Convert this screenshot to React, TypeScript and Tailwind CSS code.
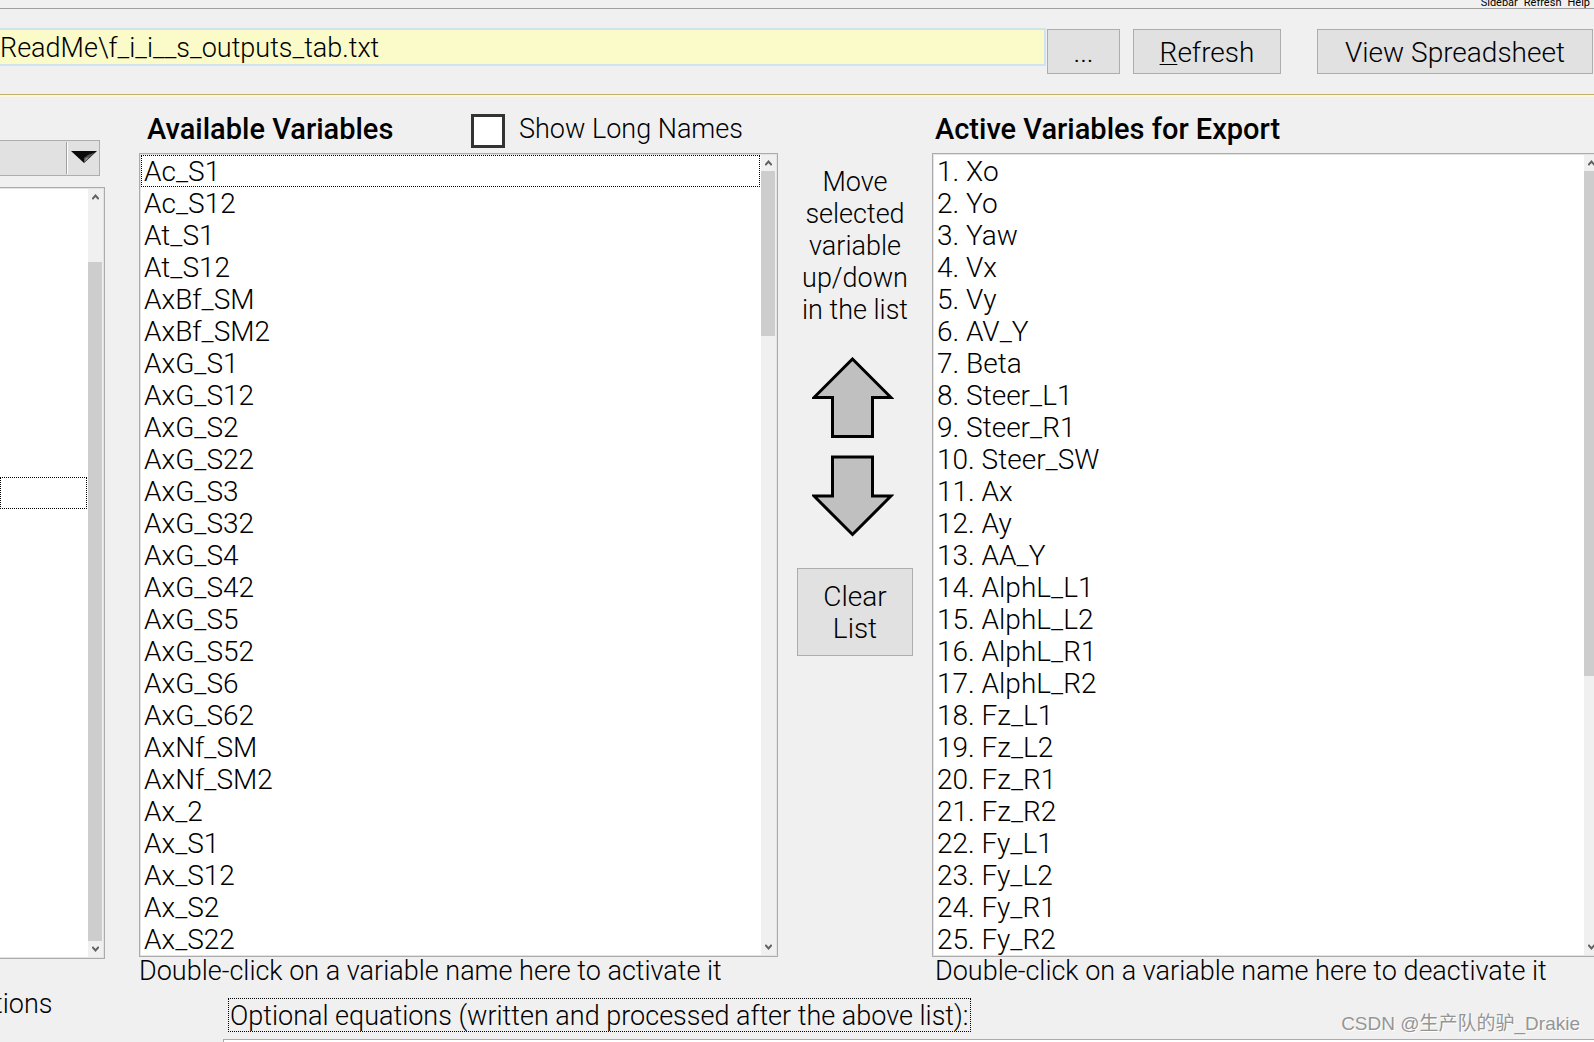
import React from 'react';

const available = [
  'Ac_S1', 'Ac_S12', 'At_S1', 'At_S12', 'AxBf_SM', 'AxBf_SM2', 'AxG_S1', 'AxG_S12', 'AxG_S2',
  'AxG_S22', 'AxG_S3', 'AxG_S32', 'AxG_S4', 'AxG_S42', 'AxG_S5', 'AxG_S52', 'AxG_S6', 'AxG_S62',
  'AxNf_SM', 'AxNf_SM2', 'Ax_2', 'Ax_S1', 'Ax_S12', 'Ax_S2', 'Ax_S22',
];

const active = [
  'Xo', 'Yo', 'Yaw', 'Vx', 'Vy', 'AV_Y', 'Beta', 'Steer_L1', 'Steer_R1', 'Steer_SW', 'Ax', 'Ay',
  'AA_Y', 'AlphL_L1', 'AlphL_L2', 'AlphL_R1', 'AlphL_R2', 'Fz_L1', 'Fz_L2', 'Fz_R1', 'Fz_R2',
  'Fy_L1', 'Fy_L2', 'Fy_R1', 'Fy_R2',
];

const categories = Array.from({ length: 24 }, () => '');

const Chevron: React.FC<{ down?: boolean }> = ({ down }) => (
  <svg width="7" height="6" viewBox="0 0 7 6" fill="none" stroke="#606060" strokeWidth="2">
    <path d={down ? 'M0.3 0.8 L3.5 4.4 L6.7 0.8' : 'M0.3 5.2 L3.5 1.6 L6.7 5.2'} />
  </svg>
);

interface ScrollBarProps {
  offset: number;
  thumb: number;
}

const ScrollBar: React.FC<ScrollBarProps> = ({ offset, thumb }) => (
  <div className="w-[15px] shrink-0 bg-[#f0f0f0] pr-px flex flex-col">
    <button aria-label="Scroll up" className="h-4 flex items-center justify-center">
      <Chevron />
    </button>
    <div className="flex-1">
      <div style={{ height: offset }} />
      <div className="bg-[#cdcdcd]" style={{ height: thumb }} />
    </div>
    <button aria-label="Scroll down" className="h-4 flex items-center justify-center">
      <Chevron down />
    </button>
  </div>
);

interface ListBoxProps extends ScrollBarProps {
  label: string;
  items: string[];
  focused?: number;
  className?: string;
}

const ListBox: React.FC<ListBoxProps> = ({ label, items, focused, offset, thumb, className = 'border p-px' }) => (
  <div className={`flex border-[#ababab] bg-[#e3e3e3] ${className}`}>
    <ul role="listbox" aria-label={label} className="flex-1 min-w-0 bg-white">
      {items.map((item, i) => (
        <li
          key={i}
          role="option"
          aria-selected={false}
          className={
            i === focused
              ? 'h-8 mr-px leading-8 px-0.5 border border-dotted border-black'
              : 'h-8 leading-[34px] px-[3px]'
          }
        >
          {item}
        </li>
      ))}
    </ul>
    <ScrollBar offset={offset} thumb={thumb} />
  </div>
);

const buttonClass = 'bg-[#e1e1e1] border border-[#adadad] text-center leading-8 pt-0.5';

export default function App() {
  return (
    <div className="h-screen overflow-hidden flex flex-col relative bg-[#f0f0f0] text-black text-[28px] font-light font-[Roboto,'Liberation_Sans',sans-serif]">
      <header className="h-[9px] shrink-0 overflow-hidden border-b border-[#a0a0a0] flex items-end justify-end gap-1.5 pr-1 text-[11px] leading-[11px] font-normal">
        <span>Sidebar</span>
        <span>Refresh</span>
        <span>Help</span>
      </header>

      <div className="shrink-0 h-[86px] pt-[19px] pr-px border-b border-[#c0b070] flex items-start">
        <input
          aria-label="Output file"
          defaultValue="ReadMe\f_i_i__s_outputs_tab.txt"
          className="flex-1 min-w-0 h-[38px] pt-0.5 mr-px bg-[#fafbc8] border-2 border-l-0 border-[#cfe3f1] text-[27px] outline-none"
        />
        <div className="flex pt-px">
          <button className={`${buttonClass} w-[73px] h-[45px]`}>...</button>
          <button className={`${buttonClass} w-[148px] h-[45px] ml-[13px]`}>
            <span className="underline decoration-1 underline-offset-2">R</span>efresh
          </button>
          <button className={`${buttonClass} w-[276px] h-[45px] ml-9`}>View Spreadsheet</button>
        </div>
      </div>
      <div className="h-0.5 shrink-0 bg-[#f9f6e6]" />

      <main className="flex-1 flex">
        <aside className="w-[105px] shrink-0 pt-[43px]">
          <div className="relative w-[100px] h-9">
            <select
              aria-label="Category"
              className="w-full h-full appearance-none bg-[#e1e1e1] border border-l-0 border-[#adadad]"
            />
            <div className="absolute right-0 inset-y-0.5 w-[34px] pb-0.5 border-l border-[#a0a0a0] flex items-center justify-center pointer-events-none shadow-[inset_1px_0_0_#fff]">
              <svg width="26" height="12" viewBox="0 0 26 12">
                <path d="M0 0 H26 L13 12 Z" fill="#0a0a0a" />
                <path d="M13 11 L24 1.5 L17 4 L13 7 Z" fill="#555" />
                <path d="M13 11 L18 6.5 L15 7 Z" fill="#999" />
              </svg>
            </div>
          </div>
          <ListBox
            label="Categories"
            items={categories}
            focused={9}
            offset={57}
            thumb={679}
            className="mt-[11px] border border-l-0 p-px pl-0"
          />
          <p className="mt-7 -ml-1.5 leading-[34px] text-[27px]">tions</p>
        </aside>

        <div className="flex-1 min-w-0 ml-[34px] -mr-[7px] pt-[15px] flex flex-col">
          <div className="flex">
            <section className="flex-[639] min-w-0">
              <div className="h-[41px] flex items-start leading-[34px]">
                <h2 className="pl-2 w-[332px] text-[29px] font-medium">Available Variables</h2>
                <input
                  id="long-names"
                  type="checkbox"
                  className="appearance-none mt-0.5 w-[34px] h-[34px] bg-white border-3 border-[#333]"
                />
                <label htmlFor="long-names" className="pl-[14px] text-[27px]">Show Long Names</label>
              </div>
              <ListBox label="Available Variables" items={available} focused={0} offset={0} thumb={165} />
              <p className="leading-7 text-[27px] whitespace-nowrap">Double-click on a variable name here to activate it</p>
            </section>

            <section className="w-[154px] shrink-0 pt-[54px] flex flex-col items-center">
              <p className="w-[116px] text-center leading-8 text-[27px]">
                Move<br />selected<br />variable<br />up/down<br />in the list
              </p>
              <button aria-label="Move up" className="mt-[31px] mr-1">
                <svg width="82" height="82" viewBox="0 0 82 82" fill="#c0c0c0" stroke="#000" strokeWidth="3">
                  <path d="M40.5 2 L79 40.5 H60.5 V79.5 H20.5 V40.5 H2 Z" />
                </svg>
              </button>
              <button aria-label="Move down" className="mt-4 mr-1">
                <svg width="82" height="82" viewBox="0 0 82 82" fill="#c0c0c0" stroke="#000" strokeWidth="3">
                  <path d="M40.5 79.5 L79 41 H60.5 V2 H20.5 V41 H2 Z" />
                </svg>
              </button>
              <button className={`${buttonClass} w-[116px] h-[88px] mt-[31px]`}>
                Clear<br />List
              </button>
            </section>

            <section className="flex-[669] min-w-0">
              <h2 className="h-[41px] pl-[3px] leading-[34px] text-[29px] font-medium">Active Variables for Export</h2>
              <ListBox
                label="Active Variables for Export"
                items={active.map((name, i) => `${i + 1}. ${name}`)}
                offset={0}
                thumb={505}
              />
              <p className="pl-[3px] leading-7 text-[27px] whitespace-nowrap">Double-click on a variable name here to deactivate it</p>
            </section>
          </div>

          <div className="flex-1 flex flex-col items-start pt-[13px] pl-[84px]">
            <label htmlFor="equations" className="ml-[5px] h-[34px] leading-[34px] text-[27px] px-px border border-dotted border-black">
              Optional equations (written and processed after the above list):
            </label>
            <textarea
              id="equations"
              rows={1}
              className="mt-[7px] w-full resize-none bg-white border border-[#ababab] outline-none"
            />
          </div>
        </div>
      </main>

      <div className="absolute right-[14px] bottom-0.5 text-[19px] leading-8 font-normal text-[#959595] [text-shadow:1px_1px_0_#fff] font-['Liberation_Sans','Noto_Sans_CJK_SC',sans-serif]">
        CSDN @生产队的驴_Drakie
      </div>
    </div>
  );
}
